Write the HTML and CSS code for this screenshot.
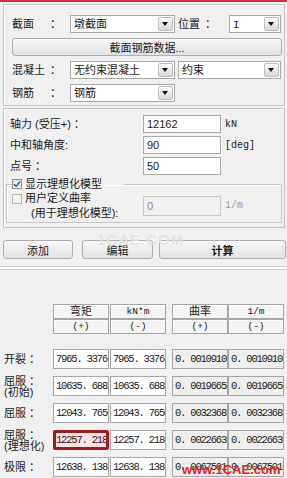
FILE: index.html
```html
<!DOCTYPE html>
<html lang="zh-CN">
<head>
    <meta charset="UTF-8">
    <meta name="viewport" content="width=device-width, initial-scale=1.0">
    <title>截面分析</title>
    <link rel="stylesheet" href="styles.css">
</head>
<body>
    <div class="red-line"></div>

    <div class="panel section-panel">
        <div class="row">
            <span class="label">截面</span><span class="colon">：</span>
            <div class="select sel-main">墩截面<i class="drop"></i></div>
            <span class="label-pos">位置</span><span class="colon-pos">：</span>
            <div class="select sel-pos"><span class="mono">I</span><i class="drop"></i></div>
        </div>
        <button class="btn btn-wide">截面钢筋数据...</button>
        <div class="row">
            <span class="label">混凝土</span><span class="colon">：</span>
            <div class="select sel-main">无约束混凝土<i class="drop"></i></div>
            <div class="select sel-side">约束<i class="drop"></i></div>
        </div>
        <div class="row">
            <span class="label">钢筋</span><span class="colon">：</span>
            <div class="select sel-main">钢筋<i class="drop"></i></div>
        </div>
    </div>

    <div class="panel param-panel">
        <div class="field">
            <span class="field-label">轴力 (受压+) ：</span>
            <div class="input">12162</div>
            <span class="unit">kN</span>
        </div>
        <div class="field">
            <span class="field-label">中和轴角度:</span>
            <div class="input">90</div>
            <span class="unit">[deg]</span>
        </div>
        <div class="field">
            <span class="field-label">点号 ：</span>
            <div class="input">50</div>
        </div>

        <fieldset class="group">
            <legend>
                <span class="check">
                    <svg width="8" height="8" viewBox="0 0 8 8"><path d="M1 4.2 L3.1 6.4 L7 1.4" stroke="#3561b3" stroke-width="1.6" fill="none"/></svg>
                </span>显示理想化模型
            </legend>
            <div class="group-body">
                <div class="group-labels">
                    <div class="check-line"><span class="check off"></span>用户定义曲率</div>
                    <div class="sub-line">(用于理想化模型):</div>
                </div>
                <div class="input disabled">0</div>
                <span class="unit muted">1/m</span>
            </div>
        </fieldset>
    </div>

    <div class="actions">
        <button class="btn btn-add">添加</button>
        <button class="btn btn-edit">编辑</button>
        <button class="btn btn-calc">计算</button>
    </div>
    <div class="separator"></div>

    <div class="results">
        <div class="res-head">
            <span class="row-label"></span>
            <span class="hcell c1">弯矩</span><span class="hcell c2 mono">kN*m</span>
            <span class="hcell c3">曲率</span><span class="hcell c4 mono">1/m</span>
        </div>
        <div class="res-head">
            <span class="row-label"></span>
            <span class="hcell c1 mono">(+)</span><span class="hcell c2 mono">(-)</span>
            <span class="hcell c3 mono">(+)</span><span class="hcell c4 mono">(-)</span>
        </div>

        <div class="res-body">
            <div class="res-row">
                <span class="row-label">开裂 ：</span>
                <span class="cell c1">7965. 3376</span><span class="cell c2">7965. 3376</span>
                <span class="cell c3">0. 00109108</span><span class="cell c4">0. 00109108</span>
            </div>
            <div class="res-row">
                <span class="row-label two">屈服 ：<br>(初始)</span>
                <span class="cell c1">10635. 6882</span><span class="cell c2">10635. 6882</span>
                <span class="cell c3">0. 00196656</span><span class="cell c4">0. 00196656</span>
            </div>
            <div class="res-row">
                <span class="row-label">屈服 ：</span>
                <span class="cell c1">12043. 7650</span><span class="cell c2">12043. 7650</span>
                <span class="cell c3">0. 00323683</span><span class="cell c4">0. 00323683</span>
            </div>
            <div class="res-row">
                <span class="row-label two">屈服 ：<br>(理想化)</span>
                <span class="cell c1 marked">12257. 2184</span><span class="cell c2">12257. 2184</span>
                <span class="cell c3">0. 00226639</span><span class="cell c4">0. 00226639</span>
            </div>
            <div class="res-row">
                <span class="row-label">极限 ：</span>
                <span class="cell c1">12638. 1384</span><span class="cell c2">12638. 1384</span>
                <span class="cell c3">0. 00675016</span><span class="cell c4">0. 00675016</span>
            </div>
        </div>
    </div>

    <div class="watermark-faint">1CAE.COM</div>
    <div class="watermark">www.1CAE.com</div>
</body>
</html>
```

FILE: styles.css
```css
* {
    box-sizing: border-box;
}
body {
    margin: 0;
    height: 478px;
    overflow: hidden;
    position: relative;
    background: #f0f0f0;
    color: #1b1b1b;
    font-family: "Liberation Sans", "Noto Sans CJK SC", sans-serif;
    font-size: 11px;
    line-height: 13px;
}
.mono {
    font-family: "Liberation Mono", "Noto Sans CJK SC", monospace;
}
.red-line {
    height: 2px;
    background: #c8343c;
}

/* group panels */
.panel {
    width: 282px;
    margin: 2px 0 0 3px;
    border: 1px solid #c4c4c4;
    box-shadow: inset 1px 1px 0 #fff;
}
.section-panel {
    display: flex;
    flex-direction: column;
    gap: 5px;
    padding: 10px 2px 3px 8px;
}
.row {
    display: flex;
    align-items: center;
    height: 18px;
}
.label {
    width: 38px;
}
.colon {
    width: 20px;
}
.label-pos {
    width: 27px;
    margin-left: 3px;
}
.colon-pos {
    width: 24px;
}
.select {
    position: relative;
    height: 18px;
    padding: 2px 0 0 3px;
    background: #fff;
    border: 1px solid #a9a9a9;
}
.sel-main {
    width: 105px;
}
.sel-pos {
    width: 52px;
}
.sel-side {
    width: 103px;
    margin-left: 3px;
}
.drop {
    position: absolute;
    top: 1px;
    right: 1px;
    width: 15px;
    height: 14px;
    border: 1px solid #bdbdbd;
    border-radius: 2px;
    background: linear-gradient(#fdfdfd, #d8d8d8);
}
.drop::after {
    content: "";
    position: absolute;
    left: 3px;
    top: 4px;
    border-left: 3.5px solid transparent;
    border-right: 3.5px solid transparent;
    border-top: 4px solid #111;
}

.btn {
    height: 19px;
    padding: 0;
    font-family: inherit;
    font-size: 11px;
    color: #1b1b1b;
    border: 1px solid #adadad;
    border-radius: 3px;
    background: linear-gradient(#f7f7f7, #e2e2e2);
}
.btn-wide {
    width: 270px;
    height: 18px;
}

/* parameters */
.param-panel {
    padding: 6px 2px 4px 2px;
}
.field {
    display: flex;
    align-items: center;
    height: 18px;
    margin-bottom: 3px;
    padding-left: 4px;
}
.field-label {
    width: 133px;
}
.input {
    width: 78px;
    height: 18px;
    padding: 2px 0 0 3px;
    background: #fff;
    border: 1px solid #a9a9a9;
}
.input.disabled {
    height: 20px;
    padding-top: 3px;
    background: #f0f0f0;
    border-color: #c8c8c8;
    color: #8a8a8a;
}
.unit {
    margin-left: 4px;
    font-family: "Liberation Mono", monospace;
    font-size: 10px;
}
.unit.muted {
    color: #9a9a9a;
}
.group {
    margin: 3px 0 0 0;
    padding: 2px 0 3px 5px;
    border: 1px solid #c8c8c8;
    box-shadow: inset 1px 1px 0 #fff;
}
.group legend {
    display: flex;
    align-items: center;
    height: 12px;
    padding: 0 22px 0 0;
}
.check {
    display: inline-flex;
    align-items: center;
    justify-content: center;
    width: 10px;
    height: 10px;
    margin-right: 3px;
    border: 1px solid #8e8f8f;
    background: linear-gradient(#e6e6e6, #fafafa);
}
.check.off {
    border-color: #b5b5b5;
    background: #f4f4f4;
}
.group-body {
    display: flex;
    align-items: center;
}
.group-labels {
    width: 131px;
}
.check-line {
    display: flex;
    align-items: center;
    height: 13px;
}
.sub-line {
    height: 14px;
    padding: 2px 0 0 19px;
}

/* actions */
.actions {
    display: flex;
    margin: 12px 0 0 3px;
}
.btn-add {
    width: 70px;
}
.btn-edit {
    width: 71px;
    margin-left: 9px;
}
.btn-calc {
    width: 127px;
    margin-left: 6px;
    font-weight: bold;
}
.separator {
    height: 4px;
    margin-top: 7px;
    border-top: 1px solid #cdcdcd;
    border-bottom: 1px solid #cdcdcd;
    background: #fafafa;
}

/* results */
.results {
    margin-top: 34px;
}
.res-head {
    display: flex;
    height: 15px;
}
.row-label {
    width: 53px;
    padding-left: 4px;
    white-space: nowrap;
}
.row-label.two {
    align-self: flex-start;
    line-height: 10.5px;
}
.hcell {
    width: 56px;
    height: 15px;
    line-height: 13px;
    text-align: center;
    background: #f4f4f4;
    border: 1px solid #a6a6a6;
    box-shadow: inset 1px 1px 0 #fff;
}
.hcell.mono {
    font-size: 9.5px;
}
.c2 {
    margin-left: 1px;
}
.c3 {
    margin-left: 6px;
}
.res-body {
    display: flex;
    flex-direction: column;
    gap: 7px;
    margin-top: 15px;
}
.res-row {
    display: flex;
    align-items: center;
    height: 20px;
}
.cell {
    width: 56px;
    height: 20px;
    padding-left: 2px;
    overflow: hidden;
    white-space: nowrap;
    font-family: "Liberation Mono", monospace;
    font-size: 10.5px;
    letter-spacing: -1.2px;
    line-height: 18px;
    background: #fff;
    border: 1px solid #a6a6a6;
}
.cell.c3,
.cell.c4 {
    background: #eeeeee;
}
.cell.marked {
    padding-left: 0;
    line-height: 14px;
    color: #3a1010;
    background: #fbe3e3;
    border: 3px solid #9e1b1b;
    border-radius: 2px;
}

/* watermarks */
.watermark-faint {
    position: absolute;
    left: 97px;
    top: 231px;
    font: bold 15px "Liberation Sans", sans-serif;
    color: #e2e2e2;
    letter-spacing: 1px;
}
.watermark {
    position: absolute;
    left: 182px;
    top: 462px;
    font: bold 13px "Liberation Sans", sans-serif;
    color: #e0231e;
}
```
